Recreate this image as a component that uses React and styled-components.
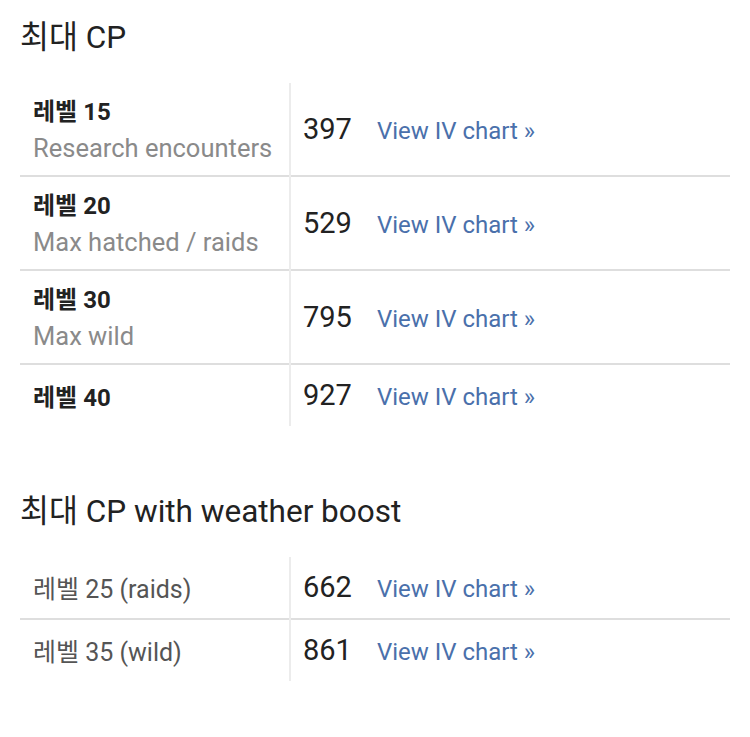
import styled, { createGlobalStyle } from 'styled-components';

const GlobalStyle = createGlobalStyle`
    body {
        margin: 0;
        background: #fff;
        font-family: Roboto, "Noto Sans CJK KR", sans-serif;
        color: #222;
    }
`;

const maxCp = [
    { level: 15, note: 'Research encounters', cp: 397 },
    { level: 20, note: 'Max hatched / raids', cp: 529 },
    { level: 30, note: 'Max wild', cp: 795 },
    { level: 40, cp: 927 },
];

const boosted = [
    { label: '레벨 25 (raids)', cp: 662 },
    { label: '레벨 35 (wild)', cp: 861 },
];

const App = () => {
    return (
        <Page>
            <GlobalStyle />
            <Heading>최대 CP</Heading>
            <Table>
                <tbody>
                    {maxCp.map((row) => (
                        <Row key={row.level}>
                            <LabelCell>
                                <Level>레벨 {row.level}</Level>
                                {row.note && <Note>{row.note}</Note>}
                            </LabelCell>
                            <ValueCell>
                                <Cp>{row.cp}</Cp>
                                <ChartLink href="#">View IV chart »</ChartLink>
                            </ValueCell>
                        </Row>
                    ))}
                </tbody>
            </Table>
            <Heading $spaced>최대 CP with weather boost</Heading>
            <Table>
                <tbody>
                    {boosted.map((row) => (
                        <Row key={row.label}>
                            <LabelCell>
                                <Plain>{row.label}</Plain>
                            </LabelCell>
                            <ValueCell>
                                <Cp>{row.cp}</Cp>
                                <ChartLink href="#">View IV chart »</ChartLink>
                            </ValueCell>
                        </Row>
                    ))}
                </tbody>
            </Table>
        </Page>
    );
};

export default App;

const Page = styled.div`
    padding: 20px 20px 40px;
`;

const Heading = styled.h2`
    margin: 0;
    margin-top: ${(p) => (p.$spaced ? '68px' : '0')};
    font-weight: 400;
    font-size: 31.5px;
    line-height: 36px;
    color: #222;
`;

const Table = styled.table`
    width: 710px;
    margin-top: 27px;
    border-collapse: collapse;
`;

const Row = styled.tr`
    border-bottom: 2px solid #dedede;
    &:last-child {
        border-bottom: none;
    }
`;

const LabelCell = styled.td`
    width: 244px;
    padding: 12px 12px 8px 13px;
    border-right: 2px solid #ececec;
    vertical-align: middle;
`;

const ValueCell = styled.td`
    padding: 12px;
    vertical-align: middle;
    white-space: nowrap;
`;

const Level = styled.div`
    font-size: 24px;
    line-height: 34px;
    font-weight: 700;
    color: #222;
`;

const Note = styled.div`
    font-size: 25.5px;
    line-height: 38px;
    color: #8a8a8a;
`;

const Plain = styled.div`
    font-size: 25px;
    line-height: 34px;
    color: #555;
`;

const Cp = styled.span`
    font-size: 29px;
    line-height: 37px;
    color: #222;
`;

const ChartLink = styled.a`
    margin-left: 25px;
    font-size: 24px;
    color: #4a70ab;
    text-decoration: none;
`;
